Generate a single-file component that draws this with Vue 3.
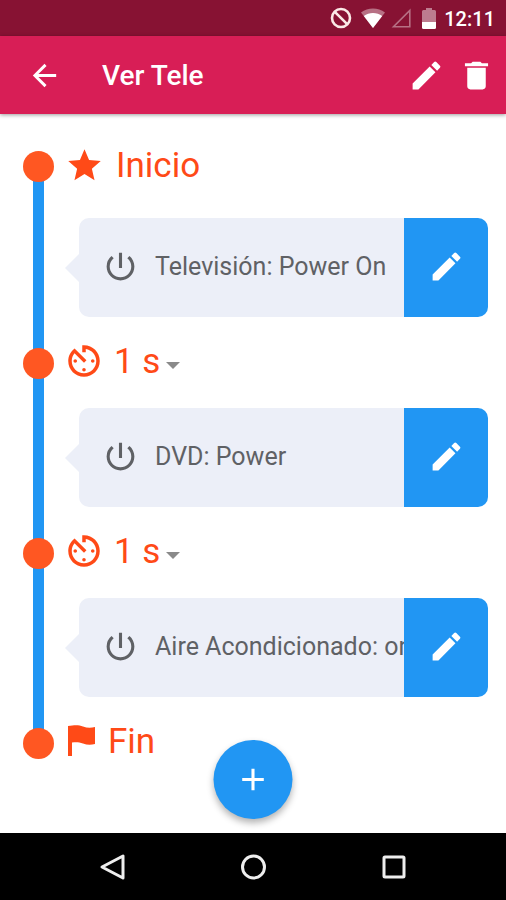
<template>
  <div class="screen">
    <div class="status-bar">
      <svg class="status-icon" viewBox="0 0 22 22" aria-hidden="true">
        <circle cx="11" cy="11" r="9" fill="none" stroke="#fbe9e7" stroke-width="2.6" />
        <path d="M4.8 4.8 17.2 17.2" stroke="#fbe9e7" stroke-width="2.6" />
      </svg>
      <svg class="status-icon wifi" viewBox="0 0 24 20" aria-hidden="true">
        <path d="M12 20 0 4.5C6.8-1 17.2-1 24 4.5z" fill="#fff" opacity="0.4" />
        <path d="M12 20 2.8 8C8 4 16 4 21.2 8z" fill="#fff" />
      </svg>
      <svg class="status-icon signal" viewBox="0 0 20 20" aria-hidden="true">
        <path d="M2.5 18.8H18.8V2.5z" fill="none" stroke="#fff" stroke-width="1.6" opacity="0.4" />
      </svg>
      <svg class="status-icon battery" viewBox="0 0 14 21" aria-hidden="true">
        <path d="M4 0h6v2h2.5Q14 2 14 3.500V14H0V3.5Q0 2 1.500 2H4z" fill="#fff" opacity="0.45" />
        <path d="M0 14h14v5.5q0 1.500-1.500 1.500h-11Q0 21 0 19.500z" fill="#fff" />
      </svg>
      <span class="clock">12:11</span>
    </div>

    <header class="app-bar">
      <button class="icon-btn" aria-label="Atrás">
        <svg class="icon back" viewBox="0 0 24 24"><path :d="icons.back" /></svg>
      </button>
      <h1 class="title">Ver Tele</h1>
      <button class="icon-btn" aria-label="Editar">
        <svg class="icon" viewBox="0 0 24 24"><path :d="icons.edit" /></svg>
      </button>
      <button class="icon-btn" aria-label="Eliminar">
        <svg class="icon" viewBox="0 0 24 24"><path :d="icons.trash" /></svg>
      </button>
    </header>

    <main class="content">
      <ol class="timeline">
        <li class="marker first">
          <span class="dot" />
          <svg class="marker-icon star" viewBox="0 0 24 24"><path :d="icons.star" /></svg>
          <span class="marker-text">Inicio</span>
        </li>

        <template v-for="(step, i) in steps" :key="step.label">
          <li v-if="i > 0" class="marker">
            <span class="dot" />
            <svg class="marker-icon" viewBox="0 0 24 24"><path :d="icons.timer" /></svg>
            <label class="delay">
              <select v-model="step.delay" class="delay-select" aria-label="Espera">
                <option v-for="n in 5" :key="n" :value="n">{{ n }} s</option>
              </select>
              <span class="caret" />
            </label>
          </li>
          <li class="card">
            <div class="card-body">
              <svg class="icon power" viewBox="0 0 24 24"><path :d="icons.power" /></svg>
              <span class="card-text">{{ step.label }}</span>
            </div>
            <button class="card-edit" :aria-label="`Editar ${step.label}`">
              <svg class="icon" viewBox="0 0 24 24"><path :d="icons.edit" /></svg>
            </button>
          </li>
        </template>

        <li class="marker last">
          <span class="dot" />
          <svg class="marker-icon flag" viewBox="0 0 28 32"><path :d="icons.flag" /></svg>
          <span class="marker-text">Fin</span>
        </li>
      </ol>

      <button class="fab" aria-label="Añadir">
        <svg class="icon" viewBox="0 0 24 24"><path :d="icons.plus" /></svg>
      </button>
    </main>

    <nav class="nav-bar">
      <button class="nav-btn" aria-label="Volver">
        <svg viewBox="0 0 28 28"><path d="M3 14 24 3v22z" /></svg>
      </button>
      <button class="nav-btn" aria-label="Inicio">
        <svg viewBox="0 0 28 28"><circle cx="14.500" cy="14" r="11" /></svg>
      </button>
      <button class="nav-btn" aria-label="Recientes">
        <svg viewBox="0 0 28 28"><rect x="5" y="4" width="20" height="20" rx="1" /></svg>
      </button>
    </nav>
  </div>
</template>

<script setup>
import { ref } from 'vue'

const steps = ref([
  { label: 'Televisión: Power On', delay: 0 },
  { label: 'DVD: Power', delay: 1 },
  { label: 'Aire Acondicionado: on', delay: 1 },
])

const icons = {
  back:  'M20 11H7.83l5.59-5.59L12 4l-8 8 8 8 1.41-1.41L7.83 13H20v-2z',
  edit:  'M3 17.25V21h3.75L17.81 9.94l-3.75-3.75L3 17.25zM20.71 7.04a1 1 0 0 0 0-1.41l-2.34-2.34a1 1 0 0 0-1.41 0l-1.83 1.83 3.75 3.75 1.83-1.83z',
  trash: 'M6 19c0 1.1.9 2 2 2h8c1.1 0 2-.9 2-2V7H6v12zM19.5 4h-4l-1-1h-5l-1 1h-4v2h15V4z',
  star:  'M12 17.27 18.18 21l-1.64-7.03L22 9.24l-7.19-.61L12 2 9.19 8.63 2 9.24l5.46 4.73L5.82 21z',
  timer: 'M11 17c0 .55.45 1 1 1s1-.45 1-1-.45-1-1-1-1 .45-1 1zm0-14v4h2V5.08c3.39.49 6 3.39 6 6.92 0 3.87-3.13 7-7 7s-7-3.13-7-7c0-1.68.59-3.22 1.58-4.42L12 13l1.41-1.41-6.8-6.8v.02C4.42 6.45 3 9.05 3 12c0 4.97 4.02 9 9 9 4.97 0 9-4.03 9-9s-4.03-9-9-9h-1zm7 9c0-.55-.45-1-1-1s-1 .45-1 1 .45 1 1 1 1-.45 1-1zM6 12c0 .55.45 1 1 1s1-.45 1-1-.45-1-1-1-1 .45-1 1z',
  power: 'M13 3h-2v10h2V3zm4.83 2.17-1.42 1.42A6.92 6.92 0 0 1 19 12c0 3.87-3.13 7-7 7s-7-3.13-7-7c0-2.19 1.01-4.14 2.58-5.42L6.17 5.17A8.93 8.93 0 0 0 3 12c0 4.97 4.03 9 9 9s9-4.03 9-9c0-2.74-1.23-5.18-3.17-6.83z',
  flag:  'M0 1C7 0 11 0 15 1.5S23 3 27 2v17c-4 1-8 1-12-.5S8 17 4 17.500V31H0z',
  plus:  'M19 13h-6v6h-2v-6H5v-2h6V5h2v6h6v2z',
}
</script>

<style>
body { margin: 0; background: #fff; }
</style>

<style scoped>
.screen {
  display: flex;
  flex-direction: column;
  min-height: 100vh;
  font-family: Roboto, sans-serif;
  background: #fff;
}

button {
  padding: 0;
  border: 0;
  background: none;
  color: inherit;
  cursor: pointer;
}

.icon {
  display: block;
  width: 37px;
  height: 37px;
  fill: currentColor;
}

.status-bar {
  display: flex;
  align-items: center;
  justify-content: flex-end;
  height: 36px;
  padding-right: 11px;
  background: #871233;
  color: #fff;
}

.status-icon { width: 22px; height: 22px; }
.wifi { width: 24px; height: 20px; margin-left: 9px; }
.signal { width: 20px; height: 20px; margin-left: 6px; }
.battery { width: 14px; height: 21px; margin-left: 11px; }

.clock {
  margin: 2px 0 0 8px;
  font-size: 20px;
  font-weight: 500;
}

.app-bar {
  position: relative;
  display: flex;
  align-items: center;
  height: 78px;
  padding: 0 5px 0 19px;
  background: #d81e56;
  color: #fff;
  box-shadow: 0 1px 4px rgba(0, 0, 0, 0.4);
}

.icon-btn {
  display: flex;
  align-items: center;
  justify-content: center;
  width: 50px;
  height: 50px;
}

.back { width: 35px; height: 35px; }

.title {
  flex: 1;
  margin: 0 0 0 33px;
  font-size: 28px;
  font-weight: 500;
}

.content {
  position: relative;
  flex: 1;
}

.timeline {
  margin: 0;
  padding: 37px 18px 74px 23px;
  list-style: none;
}

.marker {
  position: relative;
  display: flex;
  align-items: center;
  height: 31px;
  color: #ff4a17;
}

/* rail between two dots, over the card's row */
.marker:not(.last)::before {
  content: '';
  position: absolute;
  top: 15px;
  left: 10px;
  width: 11px;
  height: 200px;
  background: #2196f3;
}

.first { margin-bottom: 36px; }

.dot {
  position: relative;
  z-index: 1;
  flex: none;
  width: 31px;
  height: 31px;
  border-radius: 50%;
  background: #ff5722;
}

.marker-icon {
  flex: none;
  width: 42px;
  height: 42px;
  margin: -6px 0 0 9px;
  fill: currentColor;
}

.star { width: 39px; height: 39px; margin: -2px 2px 0 11px; }
.flag { width: 28px; height: 32px; margin: -6px 0 0 14px; }

.marker-text,
.delay-select {
  font-family: inherit;
  font-size: 35px;
  line-height: 40px;
}

.marker-text { margin: -2px 0 0 10px; }
.flag + .marker-text { margin: -4px 0 0 12px; }

.delay {
  display: flex;
  align-items: center;
  margin: -4px 0 0 9px;
}

.delay-select {
  appearance: none;
  margin: 0;
  padding: 0;
  border: 0;
  background: none;
  color: inherit;
}

.caret {
  margin: 7px 0 0 5px;
  border: 7px solid transparent;
  border-top-color: #8a8a8a;
  border-bottom: 0;
}

.card {
  position: relative;
  display: flex;
  height: 99px;
  margin: 29px 0 31px 56px;
}

/* notch that points at the rail */
.card::before {
  content: '';
  position: absolute;
  top: 36px;
  left: -14px;
  border: 14px solid transparent;
  border-right-color: #eceff8;
  border-left: 0;
}

.card-body {
  display: flex;
  align-items: center;
  flex: 1;
  min-width: 0;
  padding: 0 0 2px 23px;
  border-radius: 10px 0 0 10px;
  background: #eceff8;
  color: #5f6165;
  overflow: hidden;
}

.power { flex: none; }

.card-text {
  margin-left: 16px;
  font-size: 25px;
  white-space: nowrap;
}

.card-edit {
  display: flex;
  align-items: center;
  justify-content: center;
  flex: none;
  width: 84px;
  padding-bottom: 2px;
  border-radius: 0 10px 10px 0;
  background: #2196f3;
  color: #fff;
}

.fab {
  position: absolute;
  bottom: 14px;
  left: 50%;
  display: flex;
  align-items: center;
  justify-content: center;
  width: 79px;
  height: 79px;
  border-radius: 50%;
  background: #2196f3;
  color: #fff;
  box-shadow: 0 4px 7px rgba(0, 0, 0, 0.3);
  transform: translateX(-50%);
}

.nav-bar {
  display: flex;
  align-items: center;
  justify-content: center;
  gap: 112px;
  height: 67px;
  background: #000;
}

.nav-btn {
  width: 28px;
  height: 28px;
}

.nav-btn svg {
  display: block;
  fill: none;
  stroke: #eee;
  stroke-width: 3;
  stroke-linejoin: round;
}
</style>
